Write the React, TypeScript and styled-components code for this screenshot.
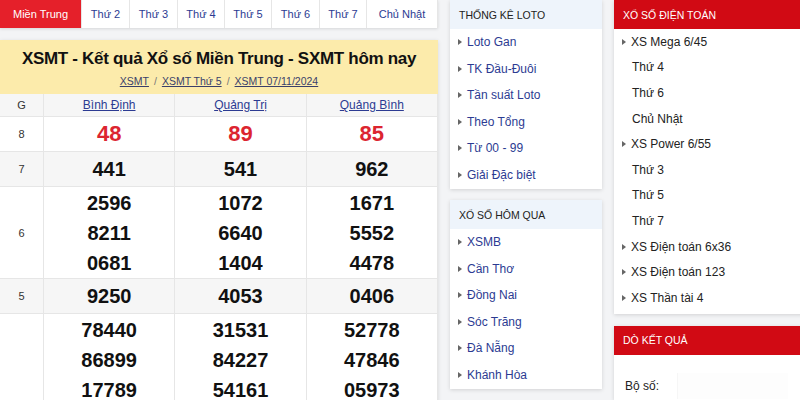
import React from 'react';
import styled, { createGlobalStyle } from 'styled-components';

const GlobalStyle = createGlobalStyle`
  body {
    margin: 0;
    background: #f3f4f6;
    font-family: "Liberation Sans", Arial, sans-serif;
  }
`;

const Page = styled.div`
  display: flex;
  align-items: flex-start;
  gap: 12px;
  width: 800px;
  height: 400px;
  overflow: hidden;
`;

const MainColumn = styled.div`
  width: 438px;
  flex-shrink: 0;
  display: flex;
  flex-direction: column;
  gap: 12px;
`;

const Tabs = styled.nav`
  display: flex;
  flex-shrink: 0;
  height: 28px;
  background: #fff;
  box-shadow: 0 1px 3px rgba(0, 0, 0, 0.12);
`;

const Tab = styled.a<{ $active?: boolean; $w: number }>`
  width: ${(p) => p.$w}px;
  display: flex;
  align-items: center;
  justify-content: center;
  font-size: 11px;
  color: ${(p) => (p.$active ? '#fff' : '#2c3b92')};
  background: ${(p) => (p.$active ? '#e5202a' : '#fff')};
  border-right: 1px solid #e6e6e6;
  box-sizing: border-box;
`;

const ResultCard = styled.section`
  flex-shrink: 0;
  background: #fff;
  box-shadow: 0 1px 4px rgba(0, 0, 0, 0.12);
`;

const TitleBox = styled.header`
  background: #fcebab;
  height: 54px;
  display: flex;
  flex-direction: column;
  align-items: center;
  padding-top: 8px;
  box-sizing: border-box;
`;

const Title = styled.h1`
  margin: 0;
  font-size: 17px;
  letter-spacing: -0.3px;
  line-height: 22px;
  font-weight: bold;
  white-space: nowrap;
  color: #111;
`;

const Crumbs = styled.div`
  margin-top: 5px;
  font-size: 10.5px;
  color: #777;
  display: flex;
  gap: 5px;
`;

const Crumb = styled.a`
  color: #3a3f6a;
  text-decoration: underline;
`;

const Table = styled.div`
  display: grid;
  grid-template-columns: 44px repeat(3, 1fr);
`;

const Cell = styled.div<{ $shade?: boolean; $tall?: boolean; $multi?: boolean }>`
  display: flex;
  flex-direction: column;
  align-items: center;
  justify-content: ${(p) => (p.$tall ? 'flex-start' : 'center')};
  min-height: ${(p) => (p.$tall ? '214px' : '0')};
  padding: ${(p) => (p.$multi ? '1px 0 0' : '2px 0')};
  border-right: 1px solid #e6e6e6;
  border-bottom: 1px solid #e6e6e6;
  background: ${(p) => (p.$shade ? '#f6f6f6' : '#fff')};
`;

const HeadCell = styled(Cell)`
  height: 23px;
  padding: 0;
  box-sizing: border-box;
  background: #f6f6f6;
  font-size: 12px;
`;

const LabelCell = styled(Cell)`
  justify-content: center;
`;

const Province = styled.a`
  color: #2c3b92;
  text-decoration: underline;
`;

const Label = styled.span`
  font-size: 11px;
  color: #333;
`;

const Num = styled.span<{ $red?: boolean }>`
  font-size: ${(p) => (p.$red ? '22px' : '20px')};
  line-height: 30px;
  font-weight: bold;
  color: ${(p) => (p.$red ? '#dc2530' : '#111')};
`;

const SideColumn = styled.div<{ $w: number }>`
  width: ${(p) => p.$w}px;
  flex-shrink: 0;
  display: flex;
  flex-direction: column;
  gap: 11px;
`;

const RightColumn = styled(SideColumn)`
  gap: 12px;
`;

const Panel = styled.section`
  background: #fff;
  box-shadow: 0 1px 4px rgba(0, 0, 0, 0.14);
  padding-bottom: 1px;
`;

const DienToanPanel = styled(Panel)`
  padding-bottom: 3px;
`;

const PanelHead = styled.h3<{ $red?: boolean }>`
  margin: 0;
  height: 29px;
  display: flex;
  align-items: center;
  padding-left: 9px;
  font-size: 10.5px;
  font-weight: normal;
  color: ${(p) => (p.$red ? '#fff' : '#222')};
  background: ${(p) => (p.$red ? '#d10a14' : '#eef4fb')};
`;

const List = styled.ul`
  list-style: none;
  margin: 0;
  padding: 0 0 0 8px;
`;

const Item = styled.li<{ $h: number; $sub?: boolean; $dark?: boolean }>`
  height: ${(p) => p.$h}px;
  display: flex;
  align-items: center;
  gap: 5px;
  padding-left: ${(p) => (p.$sub ? '10px' : '0')};
  font-size: 12px;
  color: ${(p) => (p.$dark ? '#222' : '#2c3b92')};
  &::before {
    content: '';
    display: ${(p) => (p.$sub ? 'none' : 'block')};
    border-left: 4px solid #666;
    border-top: 3px solid transparent;
    border-bottom: 3px solid transparent;
  }
`;

const FormRow = styled.div`
  display: flex;
  align-items: center;
  gap: 18px;
  padding: 18px 0 0 11px;
  font-size: 12px;
  color: #222;
`;

const Field = styled.div`
  width: 110px;
  height: 26px;
  background: #fdfdfd;
  border-left: 1px solid #f6f6f6;
`;

const tabs: [string, number][] = [
  ['Miền Trung', 82],
  ['Thứ 2', 48],
  ['Thứ 3', 48],
  ['Thứ 4', 47],
  ['Thứ 5', 47],
  ['Thứ 6', 48],
  ['Thứ 7', 47],
  ['Chủ Nhật', 71],
];

const rows: { g: string; nums: string[][]; red?: boolean; shade?: boolean; tall?: boolean }[] = [
  { g: '8', nums: [['48'], ['89'], ['85']], red: true },
  { g: '7', nums: [['441'], ['541'], ['962']], shade: true },
  {
    g: '6',
    nums: [
      ['2596', '8211', '0681'],
      ['1072', '6640', '1404'],
      ['1671', '5552', '4478'],
    ],
  },
  { g: '5', nums: [['9250'], ['4053'], ['0406']], shade: true },
  {
    g: '4',
    tall: true,
    nums: [
      ['78440', '86899', '17789'],
      ['31531', '84227', '54161'],
      ['52778', '47846', '05973'],
    ],
  },
];

const loto = ['Loto Gan', 'TK Đầu-Đuôi', 'Tần suất Loto', 'Theo Tổng', 'Từ 00 - 99', 'Giải Đặc biệt'];
const homQua = ['XSMB', 'Cần Thơ', 'Đồng Nai', 'Sóc Trăng', 'Đà Nẵng', 'Khánh Hòa'];
const dienToan: [string, boolean][] = [
  ['XS Mega 6/45', false],
  ['Thứ 4', true],
  ['Thứ 6', true],
  ['Chủ Nhật', true],
  ['XS Power 6/55', false],
  ['Thứ 3', true],
  ['Thứ 5', true],
  ['Thứ 7', true],
  ['XS Điện toán 6x36', false],
  ['XS Điện toán 123', false],
  ['XS Thần tài 4', false],
];

const App: React.FC = () => {
  return (
    <>
      <GlobalStyle />
      <Page>
        <MainColumn>
          <Tabs>
            {tabs.map(([t, w], i) => (
              <Tab key={t + i} $w={w} $active={i === 0}>
                {t}
              </Tab>
            ))}
          </Tabs>
          <ResultCard>
            <TitleBox>
              <Title>XSMT - Kết quả Xổ số Miền Trung - SXMT hôm nay</Title>
              <Crumbs>
                <Crumb>XSMT</Crumb>/<Crumb>XSMT Thứ 5</Crumb>/<Crumb>XSMT 07/11/2024</Crumb>
              </Crumbs>
            </TitleBox>
            <Table>
              <HeadCell>
                <Label>G</Label>
              </HeadCell>
              {['Bình Định', 'Quảng Trị', 'Quảng Bình'].map((p) => (
                <HeadCell key={p}>
                  <Province>{p}</Province>
                </HeadCell>
              ))}
              {rows.map((r) => {
                const multi = r.nums[0].length > 1;
                return (
                  <React.Fragment key={r.g}>
                    <LabelCell $shade={r.shade} $tall={r.tall} $multi={multi}>
                      <Label>{r.g}</Label>
                    </LabelCell>
                    {r.nums.map((col, ci) => (
                      <Cell key={ci} $shade={r.shade} $tall={r.tall} $multi={multi}>
                        {col.map((n, ni) => (
                          <Num key={ni} $red={r.red}>
                            {n}
                          </Num>
                        ))}
                      </Cell>
                    ))}
                  </React.Fragment>
                );
              })}
            </Table>
          </ResultCard>
        </MainColumn>

        <SideColumn $w={152}>
          <Panel>
            <PanelHead>THỐNG KÊ LOTO</PanelHead>
            <List>
              {loto.map((t) => (
                <Item key={t} $h={26.5}>
                  {t}
                </Item>
              ))}
            </List>
          </Panel>
          <Panel>
            <PanelHead>XỔ SỐ HÔM QUA</PanelHead>
            <List>
              {homQua.map((t) => (
                <Item key={t} $h={26.5}>
                  {t}
                </Item>
              ))}
            </List>
          </Panel>
        </SideColumn>

        <RightColumn $w={190}>
          <DienToanPanel>
            <PanelHead $red>XỔ SỐ ĐIỆN TOÁN</PanelHead>
            <List>
              {dienToan.map(([t, sub], i) => (
                <Item key={t + i} $h={25.6} $sub={sub} $dark>
                  {t}
                </Item>
              ))}
            </List>
          </DienToanPanel>
          <Panel>
            <PanelHead $red>DÒ KẾT QUẢ</PanelHead>
            <FormRow>
              Bộ số:
              <Field />
            </FormRow>
          </Panel>
        </RightColumn>
      </Page>
    </>
  );
};

export default App;
